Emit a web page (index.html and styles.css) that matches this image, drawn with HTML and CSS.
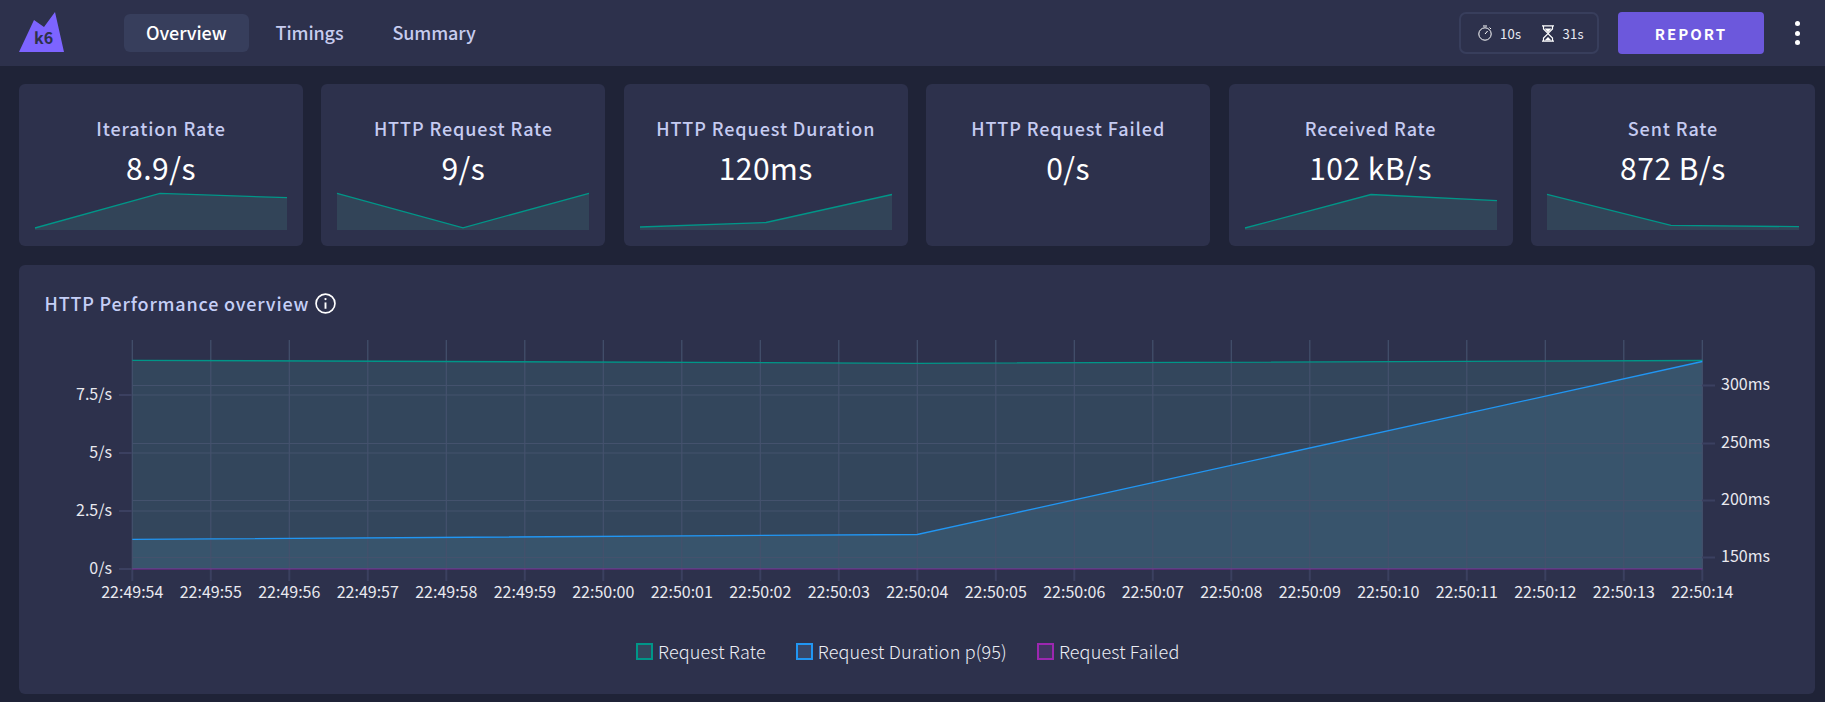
FILE: index.html
```html
<!DOCTYPE html>
<html lang="en">
<head>
<meta charset="utf-8">
<title>k6 dashboard</title>
<link rel="stylesheet" href="styles.css">
</head>
<body>
<header class="topbar">
  <div class="logo">
    <svg class="logo-mark" width="46" height="41" viewBox="0 0 46 41"><polygon points="0,40 15,8 25,15 36,0 45,40" fill="#7d64ff"/></svg>
    <span class="logo-text">k6</span>
  </div>
  <nav class="tabs">
    <a class="tab tab-active">Overview</a>
    <a class="tab">Timings</a>
    <a class="tab">Summary</a>
  </nav>
  <div class="actions">
    <div class="timers">
      <svg class="timer-icon" width="15" height="16" viewBox="0 0 15 16" fill="none" stroke="#fff" stroke-width="1"><circle cx="7" cy="9" r="6.2"/><path d="M7 9l2.6-3M5 1h4M11.5 2.5l1.5 1.5"/></svg>
      <span class="timer-text">10s</span>
      <svg class="timer-icon timer-icon-glass" width="14" height="17" viewBox="0 0 14 17" fill="none" stroke="#fff" stroke-width="1.2"><path d="M1 .8h12M1 16.2h12M2.5 1v3L7 8.5l4.5-4.5V1M2.5 16v-3L7 8.5l4.5 4.5v3"/><path d="M3.5 3.5h7L7 7.5zM3.5 15.5L7 12l3.5 3.5z" fill="#fff" stroke="none"/></svg>
      <span class="timer-text">31s</span>
    </div>
    <button class="report">REPORT</button>
    <div class="more"><i></i><i></i><i></i></div>
  </div>
</header>
<main class="content">
  <section class="cards">
    <article class="card">
      <h3 class="card-title">Iteration Rate</h3>
      <div class="card-value">8.9/s</div>
      <svg class="spark" viewBox="0 0 252 40" preserveAspectRatio="none"><path class="spark-fill" d="M0 38L125 3.3L252 7.7V40H0z"/><path class="spark-line" d="M0 38L125 3.3L252 7.7"/></svg>
    </article>
    <article class="card">
      <h3 class="card-title">HTTP Request Rate</h3>
      <div class="card-value">9/s</div>
      <svg class="spark" viewBox="0 0 252 40" preserveAspectRatio="none"><path class="spark-fill" d="M0 3.3L126 37.8L252 3.3V40H0z"/><path class="spark-line" d="M0 3.3L126 37.8L252 3.3"/></svg>
    </article>
    <article class="card">
      <h3 class="card-title">HTTP Request Duration</h3>
      <div class="card-value">120ms</div>
      <svg class="spark" viewBox="0 0 252 40" preserveAspectRatio="none"><path class="spark-fill" d="M0 37L126 32.5L252 4.5V40H0z"/><path class="spark-line" d="M0 37L126 32.5L252 4.5"/></svg>
    </article>
    <article class="card">
      <h3 class="card-title">HTTP Request Failed</h3>
      <div class="card-value">0/s</div>
      <svg class="spark" viewBox="0 0 252 40" preserveAspectRatio="none"></svg>
    </article>
    <article class="card">
      <h3 class="card-title">Received Rate</h3>
      <div class="card-value">102 kB/s</div>
      <svg class="spark" viewBox="0 0 252 40" preserveAspectRatio="none"><path class="spark-fill" d="M0 38L126 4.5L252 10.7V40H0z"/><path class="spark-line" d="M0 38L126 4.5L252 10.7"/></svg>
    </article>
    <article class="card">
      <h3 class="card-title">Sent Rate</h3>
      <div class="card-value">872 B/s</div>
      <svg class="spark" viewBox="0 0 252 40" preserveAspectRatio="none"><path class="spark-fill" d="M0 4.3L124 35.3L252 36.7V40H0z"/><path class="spark-line" d="M0 4.3L124 35.3L252 36.7"/></svg>
    </article>
  </section>
  <section class="panel">
    <h2 class="panel-title">HTTP Performance overview
      <svg class="info" width="21" height="21" viewBox="0 0 20 20" fill="none" stroke="#fff" stroke-width="1.6"><circle cx="10" cy="10" r="9"/><path d="M10 9v6" stroke-width="1.8"/><circle cx="10" cy="5.8" r="1.1" fill="#fff" stroke="none"/></svg>
    </h2>
    <svg class="chart" width="1796" height="275" viewBox="0 0 1796 275">
      <path class="area-rate" d="M113.3 30.3L898.3 33.3L1683.3 30.5V239H113.3z"/>
      <path class="area-duration" d="M113.3 209.3L898.3 204.5L1683.3 31.5V239H113.3z"/>
      <path class="grid" d="M113.3 10V239M191.8 10V239M270.3 10V239M348.8 10V239M427.3 10V239M505.8 10V239M584.3 10V239M662.8 10V239M741.3 10V239M819.8 10V239M898.3 10V239M976.8 10V239M1055.3 10V239M1133.8 10V239M1212.3 10V239M1290.8 10V239M1369.3 10V239M1447.8 10V239M1526.3 10V239M1604.8 10V239M1683.3 10V239"/>
      <path class="grid" d="M113.3 65H1683.3M113.3 123H1683.3M113.3 181H1683.3M113.3 55.5H1683.3M113.3 113.5H1683.3M113.3 170.5H1683.3M113.3 227.5H1683.3"/>
      <path class="tick" d="M113.3 239V251M191.8 239V251M270.3 239V251M348.8 239V251M427.3 239V251M505.8 239V251M584.3 239V251M662.8 239V251M741.3 239V251M819.8 239V251M898.3 239V251M976.8 239V251M1055.3 239V251M1133.8 239V251M1212.3 239V251M1290.8 239V251M1369.3 239V251M1447.8 239V251M1526.3 239V251M1604.8 239V251M1683.3 239V251"/>
      <path class="tick" d="M100 65H113M100 123H113M100 181H113M100 239H113M1683 55.5H1696M1683 113.5H1696M1683 170.5H1696M1683 227.5H1696"/>
      <path class="line-rate" d="M113.3 30.3L898.3 33.3L1683.3 30.5"/>
      <path class="line-duration" d="M113.3 209.3L898.3 204.5L1683.3 31.5"/>
      <path class="line-failed" d="M113.3 239H1683.3"/>
      <g class="axis-left">
        <text x="93" y="70">7.5/s</text>
        <text x="93" y="128">5/s</text>
        <text x="93" y="186">2.5/s</text>
        <text x="93" y="244">0/s</text>
      </g>
      <g class="axis-right">
        <text x="1702" y="60">300ms</text>
        <text x="1702" y="118">250ms</text>
        <text x="1702" y="175">200ms</text>
        <text x="1702" y="232">150ms</text>
      </g>
      <g class="axis-bottom">
        <text x="113.3" y="268">22:49:54</text>
        <text x="191.8" y="268">22:49:55</text>
        <text x="270.3" y="268">22:49:56</text>
        <text x="348.8" y="268">22:49:57</text>
        <text x="427.3" y="268">22:49:58</text>
        <text x="505.8" y="268">22:49:59</text>
        <text x="584.3" y="268">22:50:00</text>
        <text x="662.8" y="268">22:50:01</text>
        <text x="741.3" y="268">22:50:02</text>
        <text x="819.8" y="268">22:50:03</text>
        <text x="898.3" y="268">22:50:04</text>
        <text x="976.8" y="268">22:50:05</text>
        <text x="1055.3" y="268">22:50:06</text>
        <text x="1133.8" y="268">22:50:07</text>
        <text x="1212.3" y="268">22:50:08</text>
        <text x="1290.8" y="268">22:50:09</text>
        <text x="1369.3" y="268">22:50:10</text>
        <text x="1447.8" y="268">22:50:11</text>
        <text x="1526.3" y="268">22:50:12</text>
        <text x="1604.8" y="268">22:50:13</text>
        <text x="1683.3" y="268">22:50:14</text>
      </g>
    </svg>
    <ul class="legend">
      <li class="legend-item"><span class="swatch swatch-rate"></span>Request Rate</li>
      <li class="legend-item"><span class="swatch swatch-duration"></span>Request Duration p(95)</li>
      <li class="legend-item"><span class="swatch swatch-failed"></span>Request Failed</li>
    </ul>
  </section>
</main>
</body>
</html>
```
FILE: styles.css
```css
* { box-sizing: border-box; }
html, body { margin: 0; padding: 0; }
body {
  background: #1f2337;
  font-family: "Noto Sans CJK KR", "Noto Sans", sans-serif;
  color: #fff;
  height: 702px;
  overflow: hidden;
}
.topbar {
  display: flex;
  align-items: center;
  height: 66px;
  background: #2d314c;
  padding-left: 19px;
}
.logo {
  position: relative;
  width: 46px;
  height: 41px;
  margin-top: -1px;
}
.logo-mark { display: block; }
.logo-text {
  position: absolute;
  left: 15px;
  top: 13px;
  font-size: 16px;
  line-height: 24px;
  font-weight: 700;
  color: #2d314c;
}
.tabs {
  display: flex;
  gap: 5px;
  margin-left: 59px;
}
.tab {
  padding: 0 22px;
  height: 38px;
  line-height: 36px;
  font-size: 18px;
  font-weight: 500;
  letter-spacing: -.1px;
  border-radius: 6px;
  color: #c7ccee;
}
.tab-active {
  background: #373e5c;
  color: #fff;
}
.actions {
  display: flex;
  align-items: center;
  margin-left: auto;
  padding-right: 25px;
}
.timers {
  display: flex;
  align-items: center;
  width: 140px;
  height: 42px;
  padding-left: 17px;
  border: 2px solid #383e5c;
  border-radius: 7px;
}
.timer-icon { display: block; }
.timer-icon-glass { margin-left: 20px; }
.timer-text {
  margin-left: 7px;
  font-size: 13px;
  letter-spacing: .3px;
  color: #e8e9f2;
}
.report {
  width: 146px;
  height: 42px;
  margin-left: 19px;
  border: 0;
  border-radius: 4px;
  background: #6c58dc;
  color: #fff;
  font-family: inherit;
  font-size: 15px;
  font-weight: 700;
  letter-spacing: 2px;
}
.more {
  display: flex;
  flex-direction: column;
  gap: 4.5px;
  margin-left: 31px;
}
.more i {
  display: block;
  width: 5px;
  height: 5px;
  border-radius: 50%;
  background: #fff;
}
.content {
  padding: 18px 10px 0 19px;
}
.cards {
  display: grid;
  grid-template-columns: repeat(6, 284px);
  justify-content: space-between;
}
.card {
  height: 162px;
  padding: 0 16px 16px;
  background: #2d314c;
  border-radius: 6px;
  display: flex;
  flex-direction: column;
  align-items: center;
}
.card-title {
  margin: 31px 0 0;
  font-size: 18px;
  line-height: 26px;
  font-weight: 500;
  letter-spacing: .9px;
  color: #c5cbf1;
}
.card-value {
  margin-top: 4px;
  font-size: 30px;
  line-height: 44px;
  font-weight: 400;
  letter-spacing: .5px;
}
.spark {
  display: block;
  width: 100%;
  height: 40px;
  margin-top: auto;
  overflow: visible;
}
.spark-fill { fill: #324458; }
.spark-line {
  fill: none;
  stroke: #009688;
  stroke-width: 1.3;
  vector-effect: non-scaling-stroke;
}
.panel {
  height: 429px;
  margin-top: 19px;
  background: #2d314c;
  border-radius: 6px;
}
.panel-title {
  display: flex;
  align-items: center;
  gap: 6px;
  margin: 0;
  padding: 11px 0 0 25.5px;
  height: 65px;
  font-size: 18px;
  line-height: 26px;
  font-weight: 500;
  letter-spacing: .8px;
  color: #c5cff7;
}
.info { display: block; flex: none; }
.chart { display: block; }
.chart text {
  font-family: "Noto Sans CJK KR", "Noto Sans", sans-serif;
  font-size: 16px;
  fill: #e9e9ef;
}
.axis-left text { text-anchor: end; }
.axis-bottom text { text-anchor: middle; }
.area-rate { fill: #33465c; }
.area-duration { fill: #38546c; }
.grid { fill: none; stroke: #44526d; stroke-width: 1.2; }
.tick { fill: none; stroke: #3b4060; stroke-width: 2; }
.line-rate { fill: none; stroke: #009688; stroke-width: 1.3; }
.line-duration { fill: none; stroke: #2196f3; stroke-width: 1.3; }
.line-failed { fill: none; stroke: #9c27b0; stroke-width: 1; stroke-opacity: .75; }
.legend {
  display: flex;
  justify-content: flex-start;
  gap: 30px;
  list-style: none;
  margin: 0;
  padding: 34px 0 0 617px;
}
.legend-item {
  display: flex;
  align-items: center;
  gap: 5px;
  font-size: 18px;
  line-height: 24px;
  font-weight: 300;
  letter-spacing: .15px;
  color: #eceef5;
}
.swatch {
  display: block;
  width: 17px;
  height: 17px;
  border: 2px solid;
}
.swatch-rate { border-color: #009688; background: #33465c; }
.swatch-duration { border-color: #2196f3; background: #384769; }
.swatch-failed { border-color: #9c27b0; background: #413561; }
```
